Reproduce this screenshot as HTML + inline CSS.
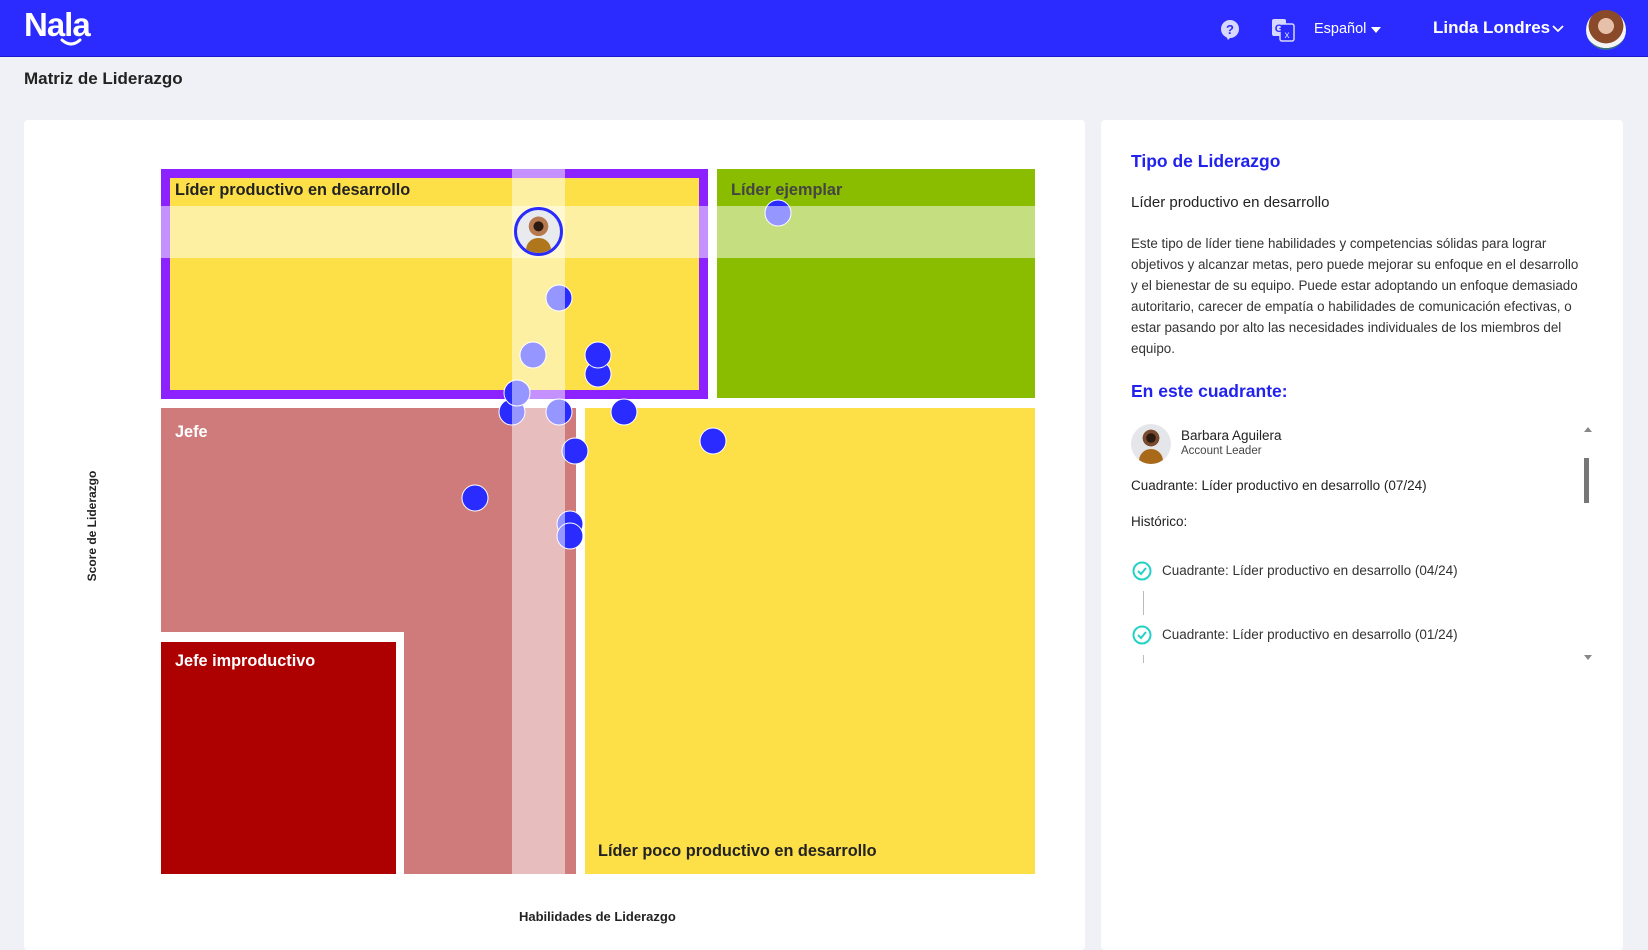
<!DOCTYPE html>
<html><head><meta charset="utf-8"><style>
*{margin:0;padding:0;box-sizing:border-box}
body{width:1648px;height:939px;overflow:hidden;background:#f0f1f6;font-family:"Liberation Sans",Arial,sans-serif;position:relative;color:#222}
.a{position:absolute}
.hdr{left:0;top:0;width:1648px;height:57px;background:#2b2bff;border-bottom:1px solid #1a1acc}
.card{background:#fff;border-radius:4px}
.dot{position:absolute;width:27px;height:27px;border-radius:50%;background:#2a2cff;border:1.5px solid #fff;transform:translate(-50%,-50%)}
.lbl{position:absolute;font-weight:bold;font-size:16.3px}
.p{font-size:13.4px;line-height:21px;color:#333}
</style></head><body>
<div class="a hdr"></div>
<div class="a" style="left:24px;top:6px;color:#fff;font-weight:bold;font-size:33px;letter-spacing:-1px">Nala</div>
<svg class="a" style="left:60px;top:38px" width="22" height="10"><path d="M2 2 Q11 10 20 2" stroke="#fff" stroke-width="3" fill="none" stroke-linecap="round"/></svg>
<svg class="a" style="left:1220px;top:19px" width="20" height="22" viewBox="0 0 20 22"><circle cx="10" cy="10" r="9" fill="#d8d8ff"/><path d="M6 17 L8 21 L11 18Z" fill="#d8d8ff"/><text x="10" y="15" font-size="13" font-weight="bold" text-anchor="middle" fill="#2b2bff" font-family="Liberation Sans">?</text></svg>
<svg class="a" style="left:1271px;top:18px" width="24" height="24" viewBox="0 0 24 24"><rect x="1" y="1" width="14" height="17" rx="2" fill="#d8d8ff"/><rect x="9" y="6" width="14" height="17" rx="2" fill="#2b2bff" stroke="#d8d8ff" stroke-width="1.5"/><text x="8" y="14" font-size="11" font-weight="bold" text-anchor="middle" fill="#2b2bff" font-family="Liberation Sans">G</text><text x="16" y="20" font-size="10" text-anchor="middle" fill="#d8d8ff" font-family="Liberation Sans">x</text></svg>
<div class="a" style="left:1314px;top:21px;color:#fff;font-size:14.5px">Español</div>
<svg class="a" style="left:1371px;top:27px" width="10" height="6"><path d="M0 0 L10 0 L5 6Z" fill="#fff"/></svg>
<div class="a" style="left:1433px;top:18px;color:#fff;font-size:17px;font-weight:bold">Linda Londres</div>
<svg class="a" style="left:1552px;top:25px" width="12" height="8"><path d="M1 1 L6 6 L11 1" stroke="#fff" stroke-width="1.8" fill="none"/></svg>
<div class="a" style="left:1586px;top:10px;width:40px;height:40px;border-radius:50%;background:radial-gradient(circle at 50% 40%,#e6c0a8 0 25%,#8a4a2a 26% 55%,#f4f4f4 56% 70%,#3b6f8a 71%)"></div>
<div class="a" style="left:24px;top:69px;font-size:17px;font-weight:bold;color:#222">Matriz de Liderazgo</div>

<div class="a card" style="left:24px;top:120px;width:1061px;height:830px"></div>
<div class="a card" style="left:1101px;top:120px;width:522px;height:830px"></div>

<div class="a" style="left:161px;top:169px;width:547px;height:230px;background:#fde047;border:9px solid #8b22ff"></div>
<div class="a" style="left:717px;top:169px;width:318px;height:229px;background:#8abd00"></div>
<div class="a" style="left:161px;top:408px;width:415px;height:466px;background:#cf7b7c"></div>
<div class="a" style="left:585px;top:408px;width:450px;height:466px;background:#fde047"></div>
<div class="a" style="left:161px;top:632px;width:243px;height:242px;background:#fff"></div>
<div class="a" style="left:161px;top:642px;width:235px;height:232px;background:#ad0000"></div>
<div class="lbl" style="left:175px;top:181px;color:#222">Líder productivo en desarrollo</div>
<div class="lbl" style="left:731px;top:181px;color:#444">Líder ejemplar</div>
<div class="lbl" style="left:175px;top:423px;color:#fff">Jefe</div>
<div class="lbl" style="left:175px;top:652px;color:#fff">Jefe improductivo</div>
<div class="lbl" style="left:598px;top:842px;color:#222">Líder poco productivo en desarrollo</div>

<div class="dot" style="left:778px;top:213px"></div>
<div class="dot" style="left:559px;top:298px"></div>
<div class="dot" style="left:533px;top:355px"></div>
<div class="dot" style="left:598px;top:374px"></div>
<div class="dot" style="left:598px;top:355px"></div>
<div class="dot" style="left:512px;top:412px"></div>
<div class="dot" style="left:517px;top:393px"></div>
<div class="dot" style="left:559px;top:412px"></div>
<div class="dot" style="left:624px;top:412px"></div>
<div class="dot" style="left:713px;top:441px"></div>
<div class="dot" style="left:575px;top:451px"></div>
<div class="dot" style="left:475px;top:498px"></div>
<div class="dot" style="left:570px;top:524px"></div>
<div class="dot" style="left:570px;top:536px"></div>

<div class="a" style="left:512px;top:169px;width:53px;height:705px;background:rgba(255,255,255,0.5)"></div>
<div class="a" style="left:161px;top:206px;width:874px;height:52px;background:rgba(255,255,255,0.5)"></div>

<div class="a" style="left:514px;top:207px;width:49px;height:49px;border-radius:50%;border:3px solid #2a2cff;background:radial-gradient(circle at 50% 38%,#2a1a10 0 14%,#b77a50 15% 28%,#e8eaee 29% 45%,#e8eaee 46%);overflow:hidden"><div style="position:absolute;left:9px;top:28px;width:25px;height:18px;border-radius:12px 12px 0 0;background:#b0761c"></div></div>

<div class="a" style="left:92px;top:526px;transform:translate(-50%,-50%) rotate(-90deg);font-size:12px;font-weight:bold;white-space:nowrap">Score de Liderazgo</div>
<div class="a" style="left:519px;top:909px;font-size:13px;font-weight:bold">Habilidades de Liderazgo</div>

<div class="a" style="left:1131px;top:151px;font-size:17.5px;font-weight:bold;color:#2222ee">Tipo de Liderazgo</div>
<div class="a" style="left:1131px;top:194px;font-size:15px;color:#222">Líder productivo en desarrollo</div>
<div class="a p" style="left:1131px;top:233px;width:452px">Este tipo de líder tiene habilidades y competencias sólidas para lograr objetivos y alcanzar metas, pero puede mejorar su enfoque en el desarrollo y el bienestar de su equipo. Puede estar adoptando un enfoque demasiado autoritario, carecer de empatía o habilidades de comunicación efectivas, o estar pasando por alto las necesidades individuales de los miembros del equipo.</div>
<div class="a" style="left:1131px;top:381px;font-size:17.5px;font-weight:bold;color:#2222ee">En este cuadrante:</div>
<div class="a" style="left:1131px;top:424px;width:40px;height:40px;border-radius:50%;background:radial-gradient(circle at 50% 35%,#2a1a10 0 14%,#7a4a30 15% 25%,#e5e6ea 26%);overflow:hidden"><div style="position:absolute;left:8px;top:25px;width:24px;height:18px;border-radius:12px 12px 0 0;background:#a86a18"></div></div>
<div class="a" style="left:1181px;top:428px;font-size:13.5px;color:#222">Barbara Aguilera</div>
<div class="a" style="left:1181px;top:445px;font-size:11.5px;color:#444">Account Leader</div>
<div class="a" style="left:1131px;top:478px;font-size:13.5px;color:#222">Cuadrante: Líder productivo en desarrollo (07/24)</div>
<div class="a" style="left:1131px;top:514px;font-size:13.5px;color:#222">Histórico:</div>
<svg class="a" style="left:1132px;top:561px" width="20" height="20"><circle cx="10" cy="10" r="8.5" fill="none" stroke="#22d3c5" stroke-width="2"/><path d="M6 10 L9 13 L14 7" stroke="#22d3c5" stroke-width="2" fill="none"/></svg>
<div class="a" style="left:1162px;top:563px;font-size:13.5px;color:#333">Cuadrante: Líder productivo en desarrollo (04/24)</div>
<div class="a" style="left:1143px;top:591px;width:1px;height:24px;background:#bbb"></div>
<svg class="a" style="left:1132px;top:625px" width="20" height="20"><circle cx="10" cy="10" r="8.5" fill="none" stroke="#22d3c5" stroke-width="2"/><path d="M6 10 L9 13 L14 7" stroke="#22d3c5" stroke-width="2" fill="none"/></svg>
<div class="a" style="left:1162px;top:627px;font-size:13.5px;color:#333">Cuadrante: Líder productivo en desarrollo (01/24)</div>
<div class="a" style="left:1143px;top:655px;width:1px;height:8px;background:#bbb"></div>
<svg class="a" style="left:1584px;top:427px" width="8" height="5"><path d="M0 5 L4 0 L8 5Z" fill="#888"/></svg>
<div class="a" style="left:1584px;top:458px;width:5px;height:45px;background:#777"></div>
<svg class="a" style="left:1584px;top:655px" width="8" height="5"><path d="M0 0 L4 5 L8 0Z" fill="#888"/></svg>
</body></html>
